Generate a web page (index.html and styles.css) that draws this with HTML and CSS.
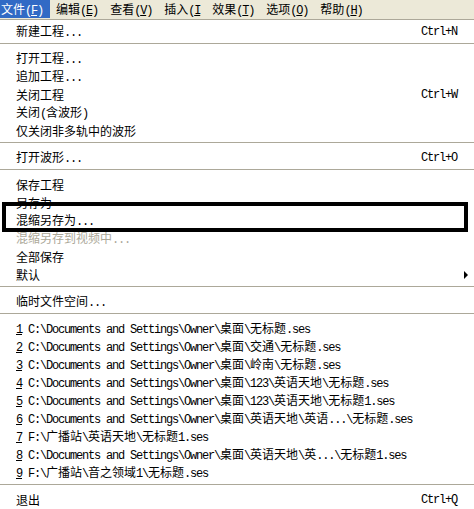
FILE: index.html
```html
<!DOCTYPE html>
<html>
<head>
    <title>文件菜单</title>
    <meta charset="utf-8">
    <link rel="stylesheet" href="styles.css">
</head>
<body>
    <div class="menubar">
        <span class="top active">文件<span class="key">(<u>F</u>)</span></span>
        <span class="top">编辑<span class="key">(<u>E</u>)</span></span>
        <span class="top">查看<span class="key">(<u>V</u>)</span></span>
        <span class="top">插入<span class="key">(<u>I</u></span></span>
        <span class="top">效果<span class="key">(<u>T</u>)</span></span>
        <span class="top">选项<span class="key">(<u>O</u>)</span></span>
        <span class="top">帮助<span class="key">(<u>H</u>)</span></span>
    </div>

    <div class="menu">
        <div class="item"><span>新建工程<span class="key">...</span></span><span class="key">Ctrl+N</span></div>
        <div class="sep"></div>
        <div class="item"><span>打开工程<span class="key">...</span></span></div>
        <div class="item"><span>追加工程<span class="key">...</span></span></div>
        <div class="item"><span>关闭工程</span><span class="key">Ctrl+W</span></div>
        <div class="item"><span>关闭<span class="key">(</span>含波形<span class="key">)</span></span></div>
        <div class="item"><span>仅关闭非多轨中的波形</span></div>
        <div class="sep"></div>
        <div class="item"><span>打开波形<span class="key">...</span></span><span class="key">Ctrl+O</span></div>
        <div class="sep"></div>
        <div class="item"><span>保存工程</span></div>
        <div class="item"><span>另存为</span></div>
        <div class="item"><span>混缩另存为<span class="key">...</span></span></div>
        <div class="item disabled"><span>混缩另存到视频中<span class="key">...</span></span></div>
        <div class="item"><span>全部保存</span></div>
        <div class="item sub"><span>默认</span><span class="arrow"></span></div>
        <div class="sep"></div>
        <div class="item"><span>临时文件空间<span class="key">...</span></span></div>
        <div class="sep"></div>
        <div class="item path"><span><u>1</u> C:\Documents and Settings\Owner\<span class="cn">桌面</span>\<span class="cn">无标题</span>.ses</span></div>
        <div class="item path"><span><u>2</u> C:\Documents and Settings\Owner\<span class="cn">桌面</span>\<span class="cn">交通</span>\<span class="cn">无标题</span>.ses</span></div>
        <div class="item path"><span><u>3</u> C:\Documents and Settings\Owner\<span class="cn">桌面</span>\<span class="cn">岭南</span>\<span class="cn">无标题</span>.ses</span></div>
        <div class="item path"><span><u>4</u> C:\Documents and Settings\Owner\<span class="cn">桌面</span>\123\<span class="cn">英语天地</span>\<span class="cn">无标题</span>.ses</span></div>
        <div class="item path"><span><u>5</u> C:\Documents and Settings\Owner\<span class="cn">桌面</span>\123\<span class="cn">英语天地</span>\<span class="cn">无标题</span>1.ses</span></div>
        <div class="item path"><span><u>6</u> C:\Documents and Settings\Owner\<span class="cn">桌面</span>\<span class="cn">英语天地</span>\<span class="cn">英语</span>...\<span class="cn">无标题</span>.ses</span></div>
        <div class="item path"><span><u>7</u> F:\<span class="cn">广播站</span>\<span class="cn">英语天地</span>\<span class="cn">无标题</span>1.ses</span></div>
        <div class="item path"><span><u>8</u> C:\Documents and Settings\Owner\<span class="cn">桌面</span>\<span class="cn">英语天地</span>\<span class="cn">英</span>...\<span class="cn">无标题</span>1.ses</span></div>
        <div class="item path"><span><u>9</u> F:\<span class="cn">广播站</span>\<span class="cn">音之领域</span>1\<span class="cn">无标题</span>.ses</span></div>
        <div class="sep"></div>
        <div class="item"><span>退出</span><span class="key">Ctrl+Q</span></div>
    </div>

    <!-- annotation box drawn over the menu -->
    <div class="mark"></div>
</body>
</html>
```

FILE: styles.css
```css
html, body {
    margin: 0;
    background: #fff;
}

body {
    position: relative;
    width: 474px;
    height: 509px;
    overflow: hidden;
    font-family: "Noto Sans CJK SC", sans-serif;
    font-size: 12px;
    color: #000;
}

.key, .path {
    font-family: "Liberation Mono", "Noto Sans CJK SC", monospace;
    letter-spacing: -1.2px;
}

.cn {
    font-family: "Noto Sans CJK SC", sans-serif;
    letter-spacing: 0;
}

u {
    text-underline-offset: 1px;
}

.menubar {
    display: flex;
    height: 19px;
    background: #ece9d8;
    border-bottom: 1px solid #aca899;
}

.top {
    height: 18px;
    line-height: 18px;
    padding: 0 6px;
    white-space: nowrap;
}

.top.active {
    padding: 0 7px 0 1px;
    background: #316ac5;
    color: #fff;
}

.menu {
    display: flex;
    flex-direction: column;
    padding-top: 3px;
}

.item {
    display: flex;
    justify-content: space-between;
    align-items: center;
    height: 18px;
    line-height: 18px;
    padding: 0 17px 0 16px;
    white-space: nowrap;
}

.item.sub {
    padding-right: 6px;
}

.disabled {
    color: #aca899;
}

.arrow {
    width: 0;
    height: 0;
    border-left: 4px solid #000;
    border-top: 4px solid transparent;
    border-bottom: 4px solid transparent;
}

.sep {
    height: 9px;
    display: flex;
    flex-direction: column;
}

.sep::before {
    content: "";
    margin-top: 2px;
    height: 1px;
    background: #aca899;
}

.mark {
    position: absolute;
    left: 2px;
    top: 202px;
    width: 466px;
    height: 30px;
    box-sizing: border-box;
    border: 4px solid #000;
}
```
